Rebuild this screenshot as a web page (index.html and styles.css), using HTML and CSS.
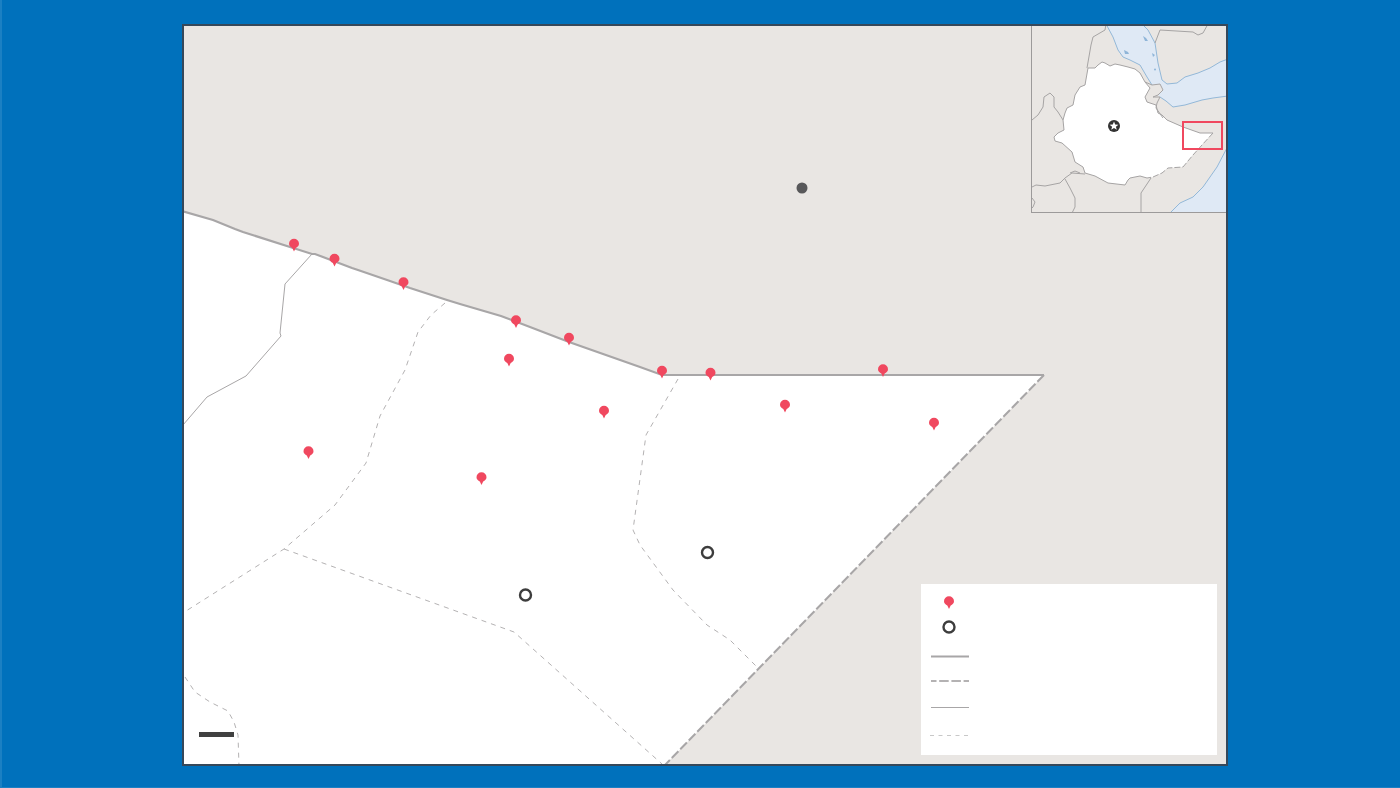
FILE: index.html
```html
<!DOCTYPE html>
<html lang="en">
  <head>
    <meta charset="UTF-8" />
    <meta name="viewport" content="width=device-width, initial-scale=1.0" />
    <title>Map</title>
    <link rel="stylesheet" href="styles.css">
  </head>
  <body>
    <div class="map">
      <!-- drawn in page coordinates so points can be read straight off the screenshot -->
      <svg class="main-map" viewBox="182 24 1046 742" width="1046" height="742">
        <defs>
          <symbol id="pin" overflow="visible">
            <path class="pin-shape" d="M0 7.5 L-1.7 3.9 C-3.4 3.2 -5 1.8 -5 -0.3 A5 5 0 1 1 5 -0.3 C5 1.8 3.4 3.2 1.7 3.9 Z" />
          </symbol>
        </defs>

        <polygon class="region" points="182,211 213,220 235,229 243,232 290,247 312,254 315,254 352,268 358,270 390,281 410,288 447,300 460,304 501,316 530,327 569,342 640,367 662,375 1044,375 664,766 182,766" />

        <path class="admin" d="M312,254 L285,284 L280,333 L281,336 L246,376 L207,397 L183,425" />
        <path class="subadmin" d="M445,303 L431,315 L418,332 L405,370 L380,416 L366,463 L335,505 L284,549 L186,611" />
        <path class="subadmin" d="M284,549 L514,632 L662,764" />
        <path class="subadmin" d="M678,379 L646,435 L633,530 L640,545 L673,590 L707,625 L730,640 L757,667" />
        <path class="subadmin" d="M185,677 L195,692 L210,702 L228,711 L234,722 L238,735 L239,766" />

        <path class="border" d="M182,211 L213,220 L235,229 L243,232 L290,247 L312,254 L315,254 L352,268 L358,270 L390,281 L410,288 L447,300 L460,304 L501,316 L530,327 L569,342 L640,367 L662,375 L1044,375" />
        <path class="border-dash" d="M1044,375 L664,766" />

        <circle class="city" cx="802" cy="188" r="5.5" />

        <use href="#pin" x="294" y="244" />
        <use href="#pin" x="334.5" y="259" />
        <use href="#pin" x="403.5" y="282.5" />
        <use href="#pin" x="516" y="320.5" />
        <use href="#pin" x="569" y="338" />
        <use href="#pin" x="509" y="359" />
        <use href="#pin" x="604" y="411" />
        <use href="#pin" x="662" y="371" />
        <use href="#pin" x="710.5" y="373" />
        <use href="#pin" x="883" y="369.5" />
        <use href="#pin" x="785" y="405" />
        <use href="#pin" x="934" y="423" />
        <use href="#pin" x="308.5" y="451.5" />
        <use href="#pin" x="481.5" y="477.5" />

        <circle class="ring" cx="707.5" cy="552.5" r="5.5" />
        <circle class="ring" cx="525.5" cy="595" r="5.5" />
      </svg>

      <div class="scale-bar"></div>

      <svg class="inset" viewBox="1032 26 194 186" width="194" height="186">
        <polygon class="water" points="1106,24 1113,37 1118,50 1123,57 1130,60 1140,65 1147,77 1152,85 1160,84 1163,90 1158,95 1160,97 1166,101 1173,107 1185,105 1202,100 1213,98 1228,96 1228,59 1220,62 1210,68 1198,73 1185,77 1177,83 1167,84 1162,80 1158,63 1155,43 1148,30 1142,24" />
        <polygon class="water" points="1170,213 1180,203 1193,197 1203,187 1217,167 1228,146 1228,213" />
        <path class="coast" d="M1106,24 L1113,37 L1118,50 L1123,57 L1130,60 L1140,65 L1147,77 L1152,85" />
        <path class="coast" d="M1160,97 L1166,101 L1173,107 L1185,105 L1202,100 L1213,98 L1228,96" />
        <path class="coast" d="M1162,80 L1167,84 L1177,83 L1185,77 L1198,73 L1210,68 L1220,62 L1228,59" />
        <path class="coast" d="M1162,80 L1158,63 L1155,43 L1148,30 L1142,24" />
        <path class="coast" d="M1170,213 L1180,203 L1193,197 L1203,187 L1217,167 L1228,146" />
        <path class="lake" d="M1143,36 L1146,38 L1148,41 L1145,41 Z" />
        <path class="lake" d="M1124,50 L1128,52 L1129,54 L1125,54 Z" />
        <path class="lake" d="M1152,53 L1155,55 L1153,57 Z" />
        <circle class="lake" cx="1155" cy="69.5" r="1" />

        <polygon class="ethiopia" points="1088,68 1095,68 1098,65 1102,62 1105,63 1110,66 1115,64 1120,65 1128,67 1135,69 1140,73 1145,82 1150,88 1145,97 1147,102 1156,105 1158,113 1162,115 1167,120 1183,127 1200,133 1213,133 1202,145 1193,155 1183,167 1168,168 1162,173 1153,177 1147,178 1140,176 1130,178 1128,180 1125,185 1108,183 1095,176 1085,173 1083,167 1075,162 1072,152 1062,143 1055,141 1054,137 1058,133 1064,130 1063,120 1065,113 1067,108 1073,105 1075,95 1080,87 1085,85" />
        <path class="land-line" d="M1213,133 L1200,133 L1183,127 L1167,120 L1162,115 L1158,113 L1156,105 L1147,102 L1145,97 L1150,88 L1145,82 L1140,73 L1135,69 L1128,67 L1120,65 L1115,64 L1110,66 L1105,63 L1102,62 L1098,65 L1095,68 L1088,68 L1085,85 L1080,87 L1075,95 L1073,105 L1067,108 L1065,113 L1063,120 L1064,130 L1058,133 L1054,137 L1055,141 L1062,143 L1072,152 L1075,162 L1083,167 L1085,173 L1095,176 L1108,183 L1125,185 L1128,180 L1130,178 L1140,176 L1147,178" />
        <path class="land-dash" d="M1213,133 L1202,145 L1193,155 L1183,167 L1168,168 L1162,173 L1153,177 L1147,178" />

        <path class="land-line" d="M1106,24 L1105,30 L1093,37 L1091,45 L1087,68" />
        <path class="land-line" d="M1032,120 L1038,115 L1043,107 L1044,97 L1050,93 L1054,97 L1054,107 L1058,112 L1063,120" />
        <path class="land-line" d="M1032,187 L1036,185 L1045,186 L1060,183 L1065,178 L1072,173 L1085,174" />
        <path class="land-line" d="M1070,173 L1075,171 L1080,173" />
        <path class="land-line" d="M1065,179 L1070,188 L1075,198 L1075,207 L1072,213" />
        <path class="land-line" d="M1032,198 L1035,202 L1033,207 L1032,208" />
        <path class="land-line" d="M1151,178 L1141,193 L1141,213" />
        <path class="land-line" d="M1155,43 L1160,30 L1193,32 L1198,35 L1203,33 L1208,24" />
        <path class="land-line" d="M1145,82 L1152,85 L1160,84 L1163,90 L1158,95 L1153,97 L1160,97" />
        <path class="land-line" d="M1160,97 L1157,103 L1156,108 L1163,118" />

        <rect class="focus" x="1183" y="122" width="39" height="27" />
        <circle class="capital" cx="1114" cy="126" r="6" />
        <polygon class="capital-star" points="1114,121.5 1115.2,124.6 1118.4,124.7 1115.9,126.7 1116.8,129.8 1114,128 1111.2,129.8 1112.1,126.7 1109.6,124.7 1112.8,124.6" />
      </svg>

      <div class="legend">
        <div class="legend-row">
          <svg class="legend-icon" viewBox="-20 -13 40 26"><use href="#pin" x="-1" y="0.5" /></svg>
        </div>
        <div class="legend-row">
          <svg class="legend-icon" viewBox="-20 -13 40 26"><circle class="ring" cx="-1" r="5.5" /></svg>
        </div>
        <div class="legend-row">
          <svg class="legend-icon" viewBox="-20 -13 40 26"><path class="border" d="M-19,0.5 H19" /></svg>
        </div>
        <div class="legend-row">
          <svg class="legend-icon" viewBox="-20 -13 40 26"><path class="border-dash dash-key" d="M-19,0 H19" /></svg>
        </div>
        <div class="legend-row">
          <svg class="legend-icon" viewBox="-20 -13 40 26"><path class="admin" d="M-19,0.5 H19" /></svg>
        </div>
        <div class="legend-row">
          <svg class="legend-icon" viewBox="-20 -13 40 26"><path class="subadmin subadmin-key" d="M-20,0.5 H18" /></svg>
        </div>
      </div>
    </div>
  </body>
</html>
```

FILE: styles.css
```css
html,
body {
  margin: 0;
  height: 100%;
}
body {
  box-sizing: border-box;
  width: 1400px;
  height: 788px;
  overflow: hidden;
  padding: 24px 0 0 180px;
  background-color: #0071bc;
  border-left: 2px solid #1b80c3;
  border-bottom: 1px solid #1b80c3;
}
.map {
  position: relative;
  width: 1046px;
  height: 742px;
  background-color: #e9e6e3;
  outline: 2px solid #36485a;
  outline-offset: -2px;
}
.main-map {
  display: block;
}
.region {
  fill: #fff;
}
.border {
  fill: none;
  stroke: #a8a6a7;
  stroke-width: 2.2;
}
.border-dash {
  fill: none;
  stroke: #a8a6a7;
  stroke-width: 2;
  stroke-dasharray: 9.5 2.7;
}
.dash-key {
  stroke-dashoffset: 4;
  stroke: #b4b2b3;
}
.admin {
  fill: none;
  stroke: #a8a6a7;
  stroke-width: 1;
}
.subadmin {
  fill: none;
  stroke: #b4b2b3;
  stroke-width: 1;
  stroke-dasharray: 5 5;
}
.subadmin-key {
  stroke: #c8c8c8;
  stroke-dasharray: 4 4.5;
}
.city {
  fill: #58585a;
}
.pin-shape {
  fill: #f0485f;
}
.ring {
  fill: #fff;
  stroke: #3d3d3d;
  stroke-width: 2.4;
}
.scale-bar {
  position: absolute;
  left: 17px;
  bottom: 29px;
  width: 35px;
  height: 5px;
  background-color: #404040;
}

/* locator map, top right */
.inset {
  position: absolute;
  top: 2px;
  right: 2px;
  display: block;
  overflow: hidden;
  border-left: 1px solid #9c9a9a;
  border-bottom: 1px solid #9c9a9a;
}
.water {
  fill: #dfe9f5;
}
.coast {
  fill: none;
  stroke: #93b8d8;
  stroke-width: 1;
}
.lake {
  fill: #8fb5d8;
}
.ethiopia {
  fill: #fff;
}
.land-line {
  fill: none;
  stroke: #a6a4a4;
  stroke-width: 1;
}
.land-dash {
  fill: none;
  stroke: #a6a4a4;
  stroke-width: 1;
  stroke-dasharray: 6 2;
}
.focus {
  fill: none;
  stroke: #f0485f;
  stroke-width: 2;
}
.capital {
  fill: #333;
}
.capital-star {
  fill: #fff;
}

.legend {
  position: absolute;
  left: 739px;
  top: 560px;
  width: 296px;
  height: 171px;
  box-sizing: border-box;
  padding-top: 4px;
  padding-left: 9px;
  background-color: #fff;
  display: grid;
  grid-template-rows: 26px 26px 32px 18px 34px 22px;
  align-content: start;
}
.legend-row {
  display: flex;
  align-items: center;
}
.legend-icon {
  width: 40px;
  height: 26px;
  overflow: visible;
}
```
